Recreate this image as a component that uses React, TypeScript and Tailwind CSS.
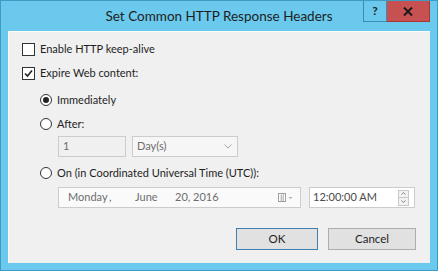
import React from "react";

const Check = ({ checked }: { checked?: boolean }) => (
  <span className="flex h-[13px] w-[13px] items-center justify-center border border-[#333333] bg-white">
    {checked && (
      <svg width="9" height="9" viewBox="0 0 9 9">
        <path d="M1 4.5 L3.5 7 L8 1.5" fill="none" stroke="#222" strokeWidth="1.6" />
      </svg>
    )}
  </span>
);

const Radio = ({ on }: { on?: boolean }) => (
  <span className="flex h-[12px] w-[12px] items-center justify-center rounded-full border border-[#333333] bg-white">
    {on && <span className="h-[6px] w-[6px] rounded-full bg-[#222]" />}
  </span>
);

export default function App() {
  return (
    <div
      className="relative flex h-[271px] w-[438px] flex-col border border-[#3f9bc4] bg-[#6ac9ec] text-[11px] text-[#1e1e1e]"
      style={{ fontFamily: 'Lato, "Noto Sans", sans-serif' }}
    >
      {/* title bar */}
      <div className="flex h-[30px] items-center justify-center text-[13.5px] text-[#1e1e1e]">
        Set Common HTTP Response Headers
      </div>
      <div className="absolute right-[7px] top-0 flex h-[21px]">
        <div className="flex w-[24px] items-center justify-center border-x border-b border-[#3a8cb3] bg-[#6ac9ec] text-[12px] font-bold">
          ?
        </div>
        <div className="flex w-[43px] items-center justify-center border-b border-r border-[#a33] bg-[#c75050]">
          <svg width="10" height="9" viewBox="0 0 10 9">
            <path d="M1 0.5 L9 8.5 M9 0.5 L1 8.5" stroke="#1a1a1a" strokeWidth="2" />
          </svg>
        </div>
      </div>

      {/* client */}
      <div className="mx-[7px] mb-[7px] flex flex-1 flex-col border-l border-t border-[#fafafa] bg-[#f0f0f0] px-[13px] pt-[5px]">
        <div className="flex h-[24px] items-center gap-[5px]">
          <Check />
          <span>Enable HTTP keep-alive</span>
        </div>
        <div className="flex h-[24px] items-center gap-[5px]">
          <Check checked />
          <span>Expire Web content:</span>
        </div>

        <div className="ml-[18px] mt-[3px] flex h-[24px] items-center gap-[5px]">
          <Radio on />
          <span>Immediately</span>
        </div>
        <div className="ml-[18px] flex h-[24px] items-center gap-[5px]">
          <Radio />
          <span>After:</span>
        </div>
        <div className="ml-[36px] flex h-[21px] gap-[6px]">
          <div className="flex w-[68px] items-center border border-[#cccccc] bg-[#f0f0f0] px-[4px] text-[#6d6d6d]">
            1
          </div>
          <div className="flex w-[106px] items-center justify-between border border-[#cccccc] bg-[#f6f6f6] px-[4px] text-[#6d6d6d]">
            <span>Day(s)</span>
            <svg width="8" height="5" viewBox="0 0 8 5" className="mr-[1px]">
              <path d="M0.5 0.5 L4 4 L7.5 0.5" fill="none" stroke="#a8a8a8" />
            </svg>
          </div>
        </div>

        <div className="ml-[18px] mt-[4px] flex h-[24px] items-center gap-[5px]">
          <Radio />
          <span>On (in Coordinated Universal Time (UTC)):</span>
        </div>
        <div className="ml-[36px] mt-[2px] flex h-[21px] gap-[8px]">
          <div className="flex w-[243px] items-center border border-[#cccccc] bg-[#fafafa] pl-[9px] pr-[6px] text-[#6d6d6d]">
            <span className="w-[41px]">Monday</span>
            <span className="w-[26px]">,</span>
            <span className="w-[40px]">June</span>
            <span className="flex-1">20, 2016</span>
            <svg width="16" height="10" viewBox="0 0 16 10">
              <rect x="0.5" y="0.5" width="7" height="8" fill="#fff" stroke="#a0a0a0" />
              <path d="M2 3 H6 M2 5 H6 M2 7 H6 M3.5 1 V8.5 M5.5 1 V8.5" stroke="#b5b5b5" strokeWidth="0.8" />
              <path d="M10.5 4 L12.5 6 L14.5 4 Z" fill="#b0b0b0" />
            </svg>
          </div>
          <div className="flex w-[106px] items-center justify-between border border-[#cccccc] bg-white pl-[3px] pr-[5px] text-[#4a4a4a]">
            <span>12:00:00 AM</span>
            <div className="flex flex-col">
              <div className="flex h-[8px] w-[11px] items-center justify-center border border-[#c8c8c8] bg-[#f2f2f2]">
                <svg width="5" height="3" viewBox="0 0 5 3">
                  <path d="M0.5 2.5 L2.5 0.5 L4.5 2.5" fill="none" stroke="#808080" />
                </svg>
              </div>
              <div className="flex h-[8px] w-[11px] items-center justify-center border border-t-0 border-[#c8c8c8] bg-[#f2f2f2]">
                <svg width="5" height="3" viewBox="0 0 5 3">
                  <path d="M0.5 0.5 L2.5 2.5 L4.5 0.5" fill="none" stroke="#808080" />
                </svg>
              </div>
            </div>
          </div>
        </div>

        <div className="mt-[20px] flex justify-end gap-[10px] pr-[1px]">
          <button className="h-[22px] w-[82px] border border-[#3c7fb1] bg-[#e1e1e1] text-[11.5px] text-[#1e1e1e]">
            OK
          </button>
          <button className="h-[22px] w-[88px] border border-[#adadad] bg-[#e1e1e1] text-[11.5px] text-[#1e1e1e]">
            Cancel
          </button>
        </div>
      </div>
    </div>
  );
}
